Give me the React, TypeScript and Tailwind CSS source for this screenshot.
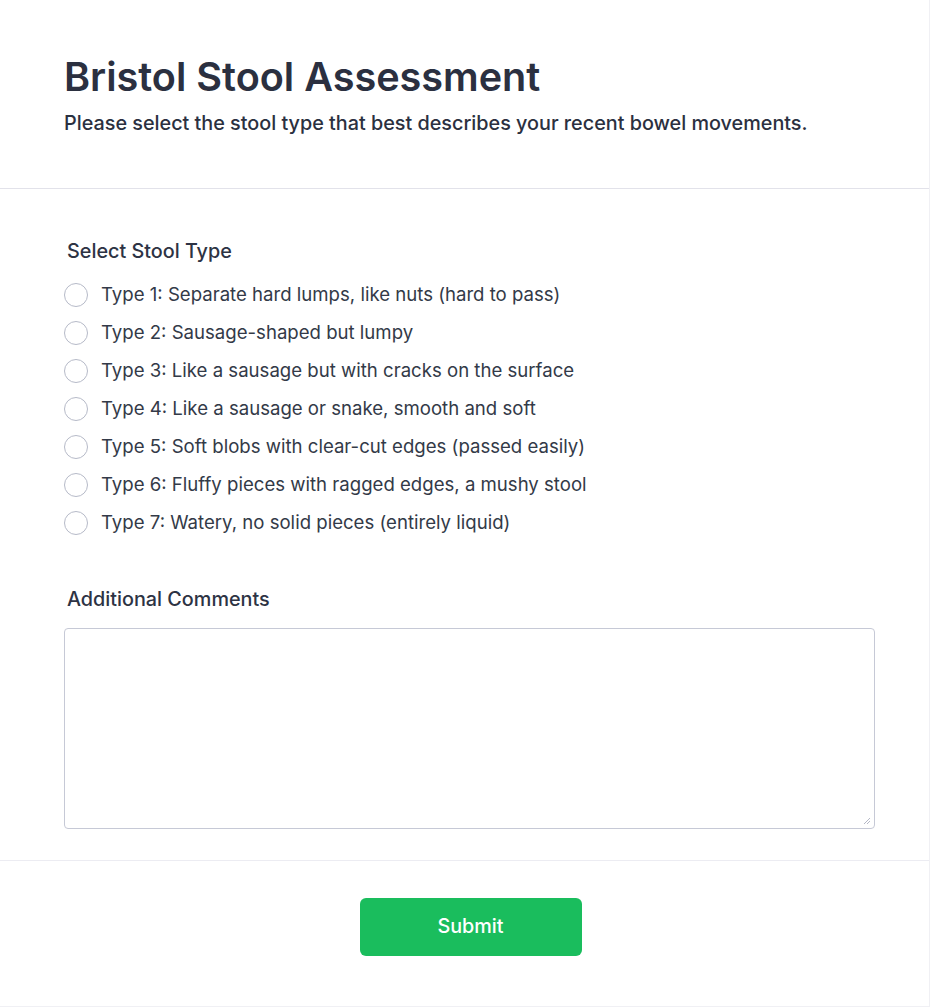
import React from "react";

const types = [
  "Type 1: Separate hard lumps, like nuts (hard to pass)",
  "Type 2: Sausage-shaped but lumpy",
  "Type 3: Like a sausage but with cracks on the surface",
  "Type 4: Like a sausage or snake, smooth and soft",
  "Type 5: Soft blobs with clear-cut edges (passed easily)",
  "Type 6: Fluffy pieces with ragged edges, a mushy stool",
  "Type 7: Watery, no solid pieces (entirely liquid)",
];

export default function App() {
  return (
    <div className="min-h-[1007px] bg-white text-[#2d3344]" style={{ fontFamily: "Inter, 'Noto Sans', sans-serif" }}>
      <div className="border-r border-b border-[#f0f0f4] h-[1007px] flex flex-col">
        <div className="px-16 pt-[55px] pb-[51px] border-b border-[#e2e2ea]">
          <h1 className="text-[39.6px] font-semibold leading-[44px] text-[#2b3040]">Bristol Stool Assessment</h1>
          <p className="mt-[10px] text-[19.8px] leading-7 font-medium text-[#2b3040]">
            Please select the stool type that best describes your recent bowel movements.
          </p>
        </div>
        <div className="px-16 pt-12 pb-[31px] border-b border-[#ececf2]">
          <div className="ml-[3px] text-[19.8px] leading-7 font-medium mb-4">Select Stool Type</div>
          <div className="flex flex-col gap-[10px]">
            {types.map((t) => (
              <label key={t} className="flex items-center h-7 gap-[13px] text-[18.6px] text-[#333a48]">
                <span className="w-6 h-6 rounded-full border border-[#b6bac8] bg-white shrink-0" />
                <span>{t}</span>
              </label>
            ))}
          </div>
          <div className="ml-[3px] mt-12 text-[19.8px] leading-7 font-medium mb-[15px]">Additional Comments</div>
          <div className="relative h-[201px] w-[811px] rounded border border-[#c6c9d6] bg-white">
            <svg className="absolute right-[3px] bottom-[3px]" width="9" height="9" viewBox="0 0 9 9">
              <path d="M8 2 L2 8 M8 5 L5 8" stroke="#b5b8c6" strokeWidth="1" />
            </svg>
          </div>
        </div>
        <div className="flex-1 flex justify-center items-start pt-[37px] pl-3">
          <button className="w-[222px] h-[58px] rounded-md bg-[#1abd5d] text-white text-[19.8px] font-medium">Submit</button>
        </div>
      </div>
    </div>
  );
}
